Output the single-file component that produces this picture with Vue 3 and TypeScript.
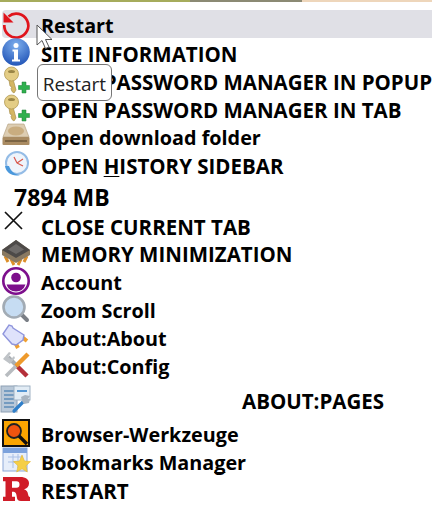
<script setup lang="ts">
type Row = { id: string; before?: string; key?: string; after?: string; kind?: string; caps?: boolean };

const rows: Row[] = [
  { id: "restart", before: "Restart", kind: "hover" },
  { id: "info", before: "S", key: "I", after: "TE INFORMATION", caps: true },
  { id: "key", before: "OPEN PASSWORD MANAGER IN POPUP", caps: true },
  { id: "key", before: "OPEN PASSWORD MANAGER IN TAB", caps: true },
  { id: "drive", before: "Open download folder" },
  { id: "history", before: "OPEN ", key: "H", after: "ISTORY SIDEBAR", caps: true },
  { id: "none", before: "7894 MB", kind: "memory" },
  { id: "close", before: "CLOSE CURRENT TAB", kind: "close", caps: true },
  { id: "chip", before: "MEMORY MINIMIZATION", kind: "chip", caps: true },
  { id: "account", before: "Account" },
  { id: "zoom", before: "Zoom Scroll" },
  { id: "plug", before: "About:About" },
  { id: "tools", before: "About:Config" },
  { id: "pages", before: "ABOUT:PAGES", kind: "pages", caps: true },
  { id: "dev", before: "Browser-Werkzeuge" },
  { id: "bookmarks", before: "Bookmarks Mana", key: "g", after: "er" },
  { id: "bigr", before: "RESTART", caps: true },
];
</script>

<template>
  <div class="page">
    <div class="strip"></div>
    <ul class="menu">
      <li v-for="(row, i) in rows" :key="i" :class="['row', row.kind, { caps: row.caps }]">
        <span v-if="row.id !== 'none'" class="icon">
          <svg viewBox="0 0 28 28" width="28" height="28">
            <g v-if="row.id === 'restart'">
              <path d="M6.500 6.500A12 12 0 1 1 2.300 15" fill="none" stroke="#e0141c" stroke-width="2.700" />
              <path d="M1.500 2.500v10h10z" fill="#e0141c" />
            </g>
            <g v-else-if="row.id === 'info'">
              <defs>
                <radialGradient id="infoFill" cx="0.5" cy="0.25" r="0.8">
                  <stop offset="0" stop-color="#7fb0ee" />
                  <stop offset="1" stop-color="#1c4fb4" />
                </radialGradient>
              </defs>
              <circle cx="14" cy="14" r="13.800" fill="url(#infoFill)" />
              <circle cx="14" cy="7.500" r="2.500" fill="#fff" />
              <path d="M10.500 11.500h5.500v10h2v2h-8v-2h2v-8h-1.500z" fill="#fff" />
            </g>
            <g v-else-if="row.id === 'key'">
              <path d="M7 14l4-1 3 11-2 3-2-1.500-1-3 1-1.500-2-1z" fill="#d4b662" stroke="#a88f4c" stroke-width="0.700" />
              <circle cx="9.500" cy="8" r="7" fill="#e4cd85" stroke="#b39a55" stroke-width="0.800" />
              <ellipse cx="9.500" cy="5.500" rx="3.500" ry="1.600" fill="#9a8546" />
              <path d="M20 16h4v3.500h3.500v4H24V27h-4v-3.500h-3.500v-4H20z" fill="#2fb04e" stroke="#1d7f36" stroke-width="0.500" />
            </g>
            <g v-else-if="row.id === 'drive'">
              <path d="M6 2h16l5 13H1z" fill="#ddcdb2" stroke="#b09c7a" stroke-width="0.600" />
              <ellipse cx="14" cy="9" rx="8" ry="4.500" fill="#c9ad80" />
              <rect x="0.500" y="15" width="27" height="8" rx="1" fill="#a98b62" />
              <rect x="3" y="18" width="22" height="2" fill="#7b6443" />
            </g>
            <g v-else-if="row.id === 'history'">
              <circle cx="15" cy="13" r="11" fill="#eef4fb" stroke="#94bce6" stroke-width="2" />
              <path d="M3 16c1 7 8 11 15 9-5-.5-9-3-11-9z" fill="#4a98dc" />
              <path d="M15 13l6-4M15 13l-3-6M15 13l6 3" stroke="#d8584c" stroke-width="1.200" fill="none" />
            </g>
            <g v-else-if="row.id === 'close'">
              <path d="M3 1l17 17M20 1L3 18" stroke="#111" stroke-width="1.700" fill="none" />
            </g>
            <g v-else-if="row.id === 'chip'">
              <path d="M3 17l3 6M9 20l3 6M25 17l-3 6M19 20l-3 6" stroke="#dc8f2a" stroke-width="3" />
              <path d="M14 1L28 11v5L14 24 0 16v-5z" fill="#8a7a62" />
              <path d="M14 1l14 10-14 8L0 11z" fill="#4d4a48" />
              <path d="M14 5l8 5.500-8 4.500-8-4.500z" fill="#6d6a68" />
            </g>
            <g v-else-if="row.id === 'account'">
              <circle cx="14" cy="14" r="12.700" fill="#fff" stroke="#7d0f8c" stroke-width="2.600" />
              <circle cx="14" cy="10.500" r="4.800" fill="#7d0f8c" />
              <path d="M4.500 17.500h19a10 10 0 0 1-19 0z" fill="#7d0f8c" />
            </g>
            <g v-else-if="row.id === 'zoom'">
              <path d="M18 18l7 7" stroke="#7a7f86" stroke-width="4" stroke-linecap="round" />
              <circle cx="12" cy="12" r="10.500" fill="#c6dcf2" stroke="#a2abb4" stroke-width="2.600" />
            </g>
            <g v-else-if="row.id === 'plug'">
              <path d="M13 19l3 6M20 14l5 4" stroke="#f0a030" stroke-width="4" />
              <path d="M1 11l6-9 3 1 1 2 11 7-1 5-7 5-4-1z" fill="#dfe2fb" stroke="#8f95dc" stroke-width="1.400" />
            </g>
            <g v-else-if="row.id === 'tools'">
              <path d="M6 6l8 8" stroke="#a9aeb3" stroke-width="4" />
              <path d="M14 14l11 11" stroke="#b5303a" stroke-width="4.500" />
              <path d="M14 15L4 25" stroke="#b8bcc0" stroke-width="3.500" />
              <path d="M26 3L14 15" stroke="#ee9a2c" stroke-width="4.500" />
              <path d="M1 8l6-7 2 1-3 4 3 2 3-3 1 2-5 6z" fill="#bfc3c7" />
            </g>
            <g v-else-if="row.id === 'pages'">
              <rect x="-1" y="1" width="16" height="26" fill="#b9c8d8" stroke="#8ea0b4" />
              <path d="M2 6h10M2 10h10M2 14h10M2 18h10M2 22h10" stroke="#5d8cb8" stroke-width="1.500" />
              <rect x="12" y="1" width="16" height="14" fill="#e2ecf5" stroke="#9fb2c4" />
              <path d="M15 6h10" stroke="#2f7fc9" stroke-width="1.600" />
              <path d="M22 16L12 26" stroke="#2f7fc9" stroke-width="3.200" stroke-linecap="round" />
              <path d="M19 12l4-2 5 1-2 3h2l-1 4-5 1-2-3z" fill="#a8b4c0" />
            </g>
            <g v-else-if="row.id === 'dev'">
              <rect x="1" y="1" width="26" height="26" fill="#fba500" stroke="#111" stroke-width="2" />
              <circle cx="12" cy="12" r="7" fill="#f0540f" stroke="#222" stroke-width="1.800" />
              <path d="M17 17l8 8" stroke="#111" stroke-width="3.400" />
            </g>
            <g v-else-if="row.id === 'bookmarks'">
              <rect x="1" y="1" width="24" height="23" fill="#e6eefa" stroke="#8ba8d8" />
              <rect x="1" y="1" width="24" height="5" fill="#7ca2dc" />
              <path d="M6 10h15M6 15h15M11 7v14M16 7v14" stroke="#a9c0e6" />
              <path d="M20 8l2.500 6 6 .6-4.500 4.200 1.300 6.200-5.300-3.200-5.300 3.200 1.300-6.200-4.500-4.200 6-.6z" fill="#f5cf47" stroke="#dfae27" stroke-width="0.500" />
            </g>
            <g v-else-if="row.id === 'bigr'">
              <path d="M1 2h17c6 0 9 2.500 9 6.500 0 3-2 5-5 5.800 2.500.7 3.500 2.200 4 4.700.4 2 .8 3 2 3V26H19c-3 0-4-1.500-4.300-4.500-.3-3-1-4.700-4-4.700H10v5h3v4.200H1V21.800h2.500V6.200H1zM10 6.200v6.500h4.500c2 0 3-1.200 3-3.300 0-2.100-1-3.200-3-3.200z" fill="#d01c28" fill-rule="evenodd" />
            </g>
          </svg>
        </span>
        <span class="label">{{ row.before }}<u v-if="row.key">{{ row.key }}</u>{{ row.after }}</span>
      </li>
    </ul>
    <div class="tooltip">Restart</div>
    <svg class="cursor" viewBox="0 0 20 28" width="20" height="28">
      <path d="M1 1v20l5-4.500 3.500 8 3.500-1.500-3.500-7.500h6.500z" fill="#fff" stroke="#555" stroke-width="1" />
    </svg>
  </div>
</template>

<style scoped>
.page {
  position: relative;
  width: 432px;
  height: 510px;
  overflow: hidden;
  background: #fff;
  font-family: "Open Sans", "Noto Sans", sans-serif;
  color: #000;
}

.strip {
  height: 2px;
  margin-bottom: 8px;
  background: linear-gradient(90deg, #a6ac5c 0, #a6ac5c 190px, #8b8a74 190px, #8b8a74 302px, #eed6bb 302px);
}

.menu {
  list-style: none;
  margin: 0;
  padding: 0;
}

.row {
  display: flex;
  align-items: center;
  height: 28px;
  padding-left: 2px;
}

.row.hover {
  margin-left: 2px;
  padding-left: 0;
  background: #e0e0e6;
  border-radius: 4px 0 0 4px;
}

.row.memory {
  height: 34px;
  padding-left: 14px;
}

.row.memory .label {
  font-size: 23px;
}

.row.close {
  height: 26px;
}

.row.chip {
  height: 29px;
}

.row.pages {
  height: 40px;
}

.row.pages .label {
  margin-left: 201px;
}

.icon {
  flex: none;
  width: 28px;
  height: 28px;
  margin-right: 11px;
}

.icon svg {
  display: block;
  overflow: visible;
}

.label {
  margin-top: 3px;
  font-size: 19.800px;
  font-weight: 700;
  line-height: 28px;
  white-space: nowrap;
}

.caps .label {
  font-size: 20.500px;
}

.label u {
  text-underline-offset: 2px;
  text-decoration-thickness: 1px;
  text-decoration-skip-ink: none;
}

.tooltip {
  position: absolute;
  left: 37px;
  top: 64px;
  width: 75px;
  height: 37px;
  box-sizing: border-box;
  border: 1px solid #767676;
  border-radius: 6px;
  background: #fff;
  font-size: 19px;
  line-height: 38px;
  text-align: center;
  color: #222;
}

.cursor {
  position: absolute;
  left: 36px;
  top: 24px;
}
</style>

<style>
html,
body {
  margin: 0;
  background: #fff;
}
</style>
